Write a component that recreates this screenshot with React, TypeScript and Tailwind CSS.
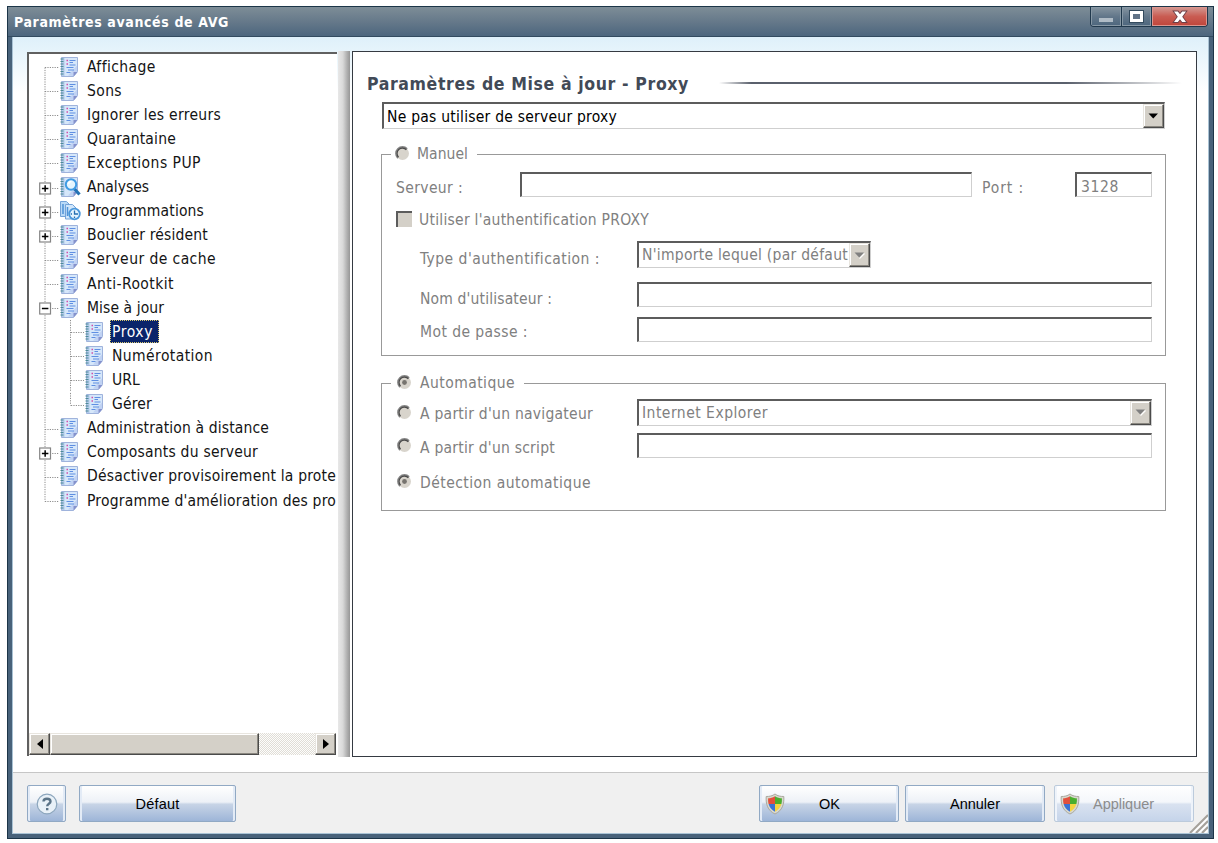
import { useLayoutEffect, useRef, type ReactNode } from "react";
import clsx from "clsx";

/** One line of text whose letter spacing is adjusted so that it spans `w` pixels. */
function Label({ text, w, className }: { text: string; w: number; className?: string }) {
  const ref = useRef<HTMLSpanElement>(null);
  useLayoutEffect(() => {
    const el = ref.current;
    if (!el) return;
    el.style.letterSpacing = "0px";
    const natural = el.getBoundingClientRect().width;
    el.style.letterSpacing = `${(w + 1 - natural) / text.length}px`;
  }, [text, w]);
  return (
    <span className={clsx("shrink-0", className)}>
      <span ref={ref} className="inline-block whitespace-pre">
        {text}
      </span>
    </span>
  );
}

function NotePage() {
  return (
    <>
      <path d="M2.500 1.500h16v14l-4 5h-12z" fill="#d6e7fa" stroke="#9fb3dc" />
      <path d="M3 2h2.500v18H3z" fill="#b3cbea" />
      <path d="M9 19.500l9-10v6l-3.500 4.500z" fill="#c0d2f3" />
      <path d="M14.500 20.500v-4.500h4z" fill="#8592cc" />
      <path d="M1.500 3h3M1.500 5.500h3M1.500 8h3M1.500 10.500h3M1.500 13h3M1.500 15.500h3M1.500 18h3" stroke="#4d8c96" strokeWidth="1.200" />
    </>
  );
}

function NoteIcon() {
  return (
    <svg viewBox="0 0 21 22" className="h-[22px] w-[21px] shrink-0">
      <NotePage />
      <path d="M7.500 4.500h1.500M7.500 8h1.500" stroke="#d04fa8" strokeWidth="1.400" />
      <path d="M10.500 4.500h6M10.500 6.500h3.500M10.500 9h6" stroke="#5f8fe2" strokeWidth="1.100" />
      <path d="M7.500 11.500h7M9 14h6M7.500 16.500h4" stroke="#5f8fe2" strokeWidth="1.100" />
    </svg>
  );
}

function SearchNoteIcon() {
  return (
    <svg viewBox="0 0 21 22" className="h-[22px] w-[21px] shrink-0 overflow-visible">
      <NotePage />
      <path d="M15.500 13l5 5.500" stroke="#2372b4" strokeWidth="3.200" />
      <circle cx="12" cy="8.500" r="5.200" fill="#e4f5ff" stroke="#3f9be4" strokeWidth="2" />
      <path d="M9.500 8a3 3 0 0 1 3-2.500" stroke="#fff" strokeWidth="1.500" fill="none" />
    </svg>
  );
}

function ScheduleIcon() {
  return (
    <svg viewBox="0 0 21 22" className="h-[22px] w-[21px] shrink-0 overflow-visible">
      <path d="M1.500 1.500h6l3 3v12h-9z" fill="#b9d9f7" stroke="#74a3d8" />
      <path d="M6.500 4.500h7l3.500 3.500v11h-10.500z" fill="#d0e6fb" stroke="#74a3d8" />
      <path d="M4 4v10M8.500 7v9" stroke="#4f93d8" strokeWidth="1.500" />
      <circle cx="15.500" cy="14" r="5.300" fill="#e6f5ff" stroke="#4b97da" strokeWidth="1.800" />
      <path d="M15.500 10.500v3.500h3.500M15.500 16.500v1.500M11.800 14h1.200" stroke="#246eb0" strokeWidth="1.300" fill="none" />
    </svg>
  );
}

type Kind = "note" | "search" | "schedule";
type Node = { text: string; w: number; kind?: Kind; box?: "+" | "-"; child?: boolean; selected?: boolean };

const nodes: Node[] = [
  { text: "Affichage", w: 68 },
  { text: "Sons", w: 34 },
  { text: "Ignorer les erreurs", w: 133 },
  { text: "Quarantaine", w: 88 },
  { text: "Exceptions PUP", w: 113 },
  { text: "Analyses", w: 61, kind: "search", box: "+" },
  { text: "Programmations", w: 116, kind: "schedule", box: "+" },
  { text: "Bouclier résident", w: 120, box: "+" },
  { text: "Serveur de cache", w: 128 },
  { text: "Anti-Rootkit", w: 86 },
  { text: "Mise à jour", w: 76, box: "-" },
  { text: "Proxy", w: 40, child: true, selected: true },
  { text: "Numérotation", w: 100, child: true },
  { text: "URL", w: 27, child: true },
  { text: "Gérer", w: 39, child: true },
  { text: "Administration à distance", w: 181 },
  { text: "Composants du serveur", w: 170, box: "+" },
  { text: "Désactiver provisoirement la prote", w: 248 },
  { text: "Programme d'amélioration des pro", w: 248 },
];

function Connector({ node, first, last }: { node: Node; first: boolean; last: boolean }) {
  const dots = { stroke: "#8c8c8c", strokeWidth: 1, strokeDasharray: "1.2 1.2" };
  return (
    <svg viewBox={node.child ? "0 0 45 24.11" : "0 0 20 24.11"} className={clsx("h-[24.11px] shrink-0", node.child ? "w-[45px]" : "w-[20px]")}>
      <line x1="6" x2="6" y1={first ? 12.5 : 0} y2={last ? 12.5 : 24.11} {...dots} />
      {node.child ? (
        <>
          <line x1="31.500" x2="31.500" y1="0" y2={node.text === "Gérer" ? 12.5 : 24.11} {...dots} />
          <line x1="32" x2="45" y1="12.500" y2="12.500" {...dots} />
        </>
      ) : (
        <line x1="6" x2="20" y1="12.500" y2="12.500" {...dots} />
      )}
      {node.box && (
        <>
          <rect x="0.700" y="7" width="10.800" height="11" fill="#fff" stroke="#858585" strokeWidth="1.200" />
          <path d={node.box === "+" ? "M2.900 12.500h6.500M6.150 9.200v6.600" : "M2.900 12.500h6.500"} stroke="#000" strokeWidth="1.500" />
        </>
      )}
    </svg>
  );
}

function Tree() {
  return (
    <ul className="flex flex-1 flex-col overflow-hidden pt-px">
      {nodes.map((n, i) => (
        <li key={n.text} className="flex h-[24.11px] shrink-0 items-center pl-[10px]">
          <Connector node={n} first={i === 0} last={i === nodes.length - 1} />
          <span className="-mt-px flex shrink-0">
            {n.kind === "search" ? <SearchNoteIcon /> : n.kind === "schedule" ? <ScheduleIcon /> : <NoteIcon />}
          </span>
          {n.selected ? (
            <span className="-mt-px ml-[5px] flex h-[23px] w-[49px] items-center border border-dotted border-[#d8c870] bg-[#0a246a] pl-px text-white">
              <Label text={n.text} w={n.w} />
            </span>
          ) : (
            <span className="-mt-px pl-[7px]">
              <Label text={n.text} w={n.w} />
            </span>
          )}
        </li>
      ))}
    </ul>
  );
}

const raised =
  "border border-t-[#e8e5df] border-l-[#e8e5df] border-r-[#4a4a4a] border-b-[#4a4a4a] bg-[#d4d0c8] shadow-[inset_-1px_-1px_0_#8a8780,inset_1px_1px_0_#fff]";

function ScrollBar() {
  return (
    <div className="mr-px mb-px flex h-[22px] shrink-0 bg-[repeating-conic-gradient(#e0ddd6_0_25%,#fdfdfc_0_50%)] bg-[length:2px_2px]">
      <div className={clsx("flex w-[21px] items-center justify-center", raised)}>
        <svg viewBox="0 0 6 10" className="h-[10px] w-[6px]"><path d="M6 0v10L0 5z" /></svg>
      </div>
      <div className={clsx("w-[209px]", raised)} />
      <div className={clsx("ml-auto flex w-[21px] items-center justify-center", raised)}>
        <svg viewBox="0 0 6 10" className="h-[10px] w-[6px]"><path d="M0 0v10l6-5z" /></svg>
      </div>
    </div>
  );
}

const sunken = "border-t-2 border-l-2 border-r border-b border-t-[#5c5c5c] border-l-[#5c5c5c] border-r-[#cfcfcf] border-b-[#cfcfcf] bg-white";

function Field({ className, children }: { className: string; children?: ReactNode }) {
  return <div className={clsx("flex h-[25px] shrink-0 items-center", sunken, className)}>{children}</div>;
}

function Combo({ text, w, className, disabled }: { text: string; w: number; className: string; disabled?: boolean }) {
  return (
    <div className={clsx("flex h-[27px] shrink-0 items-center pl-[3px]", sunken, className)}>
      <Label text={text} w={w} className={disabled ? "" : "pt-[2px]"} />
      <div className={clsx("ml-auto flex h-full w-[21px] shrink-0 items-center justify-center", raised)}>
        <svg viewBox="0 0 11 7" className="h-[7px] w-[11px]">
          {disabled && <path d="M5.500 6.500L10.500 1.500" stroke="#fff" strokeWidth="1.200" fill="none" />}
          <path d="M0.500 0.500h9.500L5.250 5.500z" fill={disabled ? "#808080" : "#000"} />
        </svg>
      </div>
    </div>
  );
}

function Radio({ on, className }: { on?: boolean; className?: string }) {
  return (
    <svg viewBox="0 0 15 15" className={clsx("h-[15px] w-[15px] shrink-0", className)}>
      <circle cx="7.500" cy="7.500" r="6.500" fill="#d8d4cc" />
      <path d="M2.800 12.200A6.600 6.600 0 0 1 12.200 2.800" fill="none" stroke="#858585" strokeWidth="1.500" />
      <path d="M3.500 11.200A5.400 5.400 0 0 1 11.400 3.700" fill="none" stroke="#4a4a4a" strokeWidth="1.300" />
      {on && <circle cx="7.500" cy="7.500" r="2.400" fill="#77746f" />}
    </svg>
  );
}

function Shield() {
  return (
    <svg viewBox="0 0 20 22" className="h-[22px] w-[20px]">
      <path d="M10 1C7.500 3 4.500 3.500 1.200 3.500C.7 11 2.500 17.500 10 21C17.500 17.500 19.300 11 18.800 3.500C15.500 3.500 12.500 3 10 1z" fill="#d9d8ce" stroke="#a9a89e" />
      <path d="M10 3.300C7.500 4.800 5.500 5.300 3.200 5.300C3 7.500 3.100 9.200 3.600 11H10z" fill="#e2503c" />
      <path d="M10 3.300C12.500 4.800 14.500 5.300 16.800 5.300C17 7.500 16.900 9.200 16.400 11H10z" fill="#4aae2e" />
      <path d="M3.600 11H10V18.700C6.600 17 4.700 14.700 3.600 11z" fill="#3a72d4" />
      <path d="M16.400 11H10V18.700C13.400 17 15.300 14.700 16.400 11z" fill="#f4d440" />
    </svg>
  );
}

function Button({ className, disabled, children }: { className: string; disabled?: boolean; children: ReactNode }) {
  return (
    <button
      className={clsx(
        "flex h-[37px] shrink-0 items-center rounded-[2px] border font-['Liberation_Sans',sans-serif] text-[14.500px]",
        disabled
          ? "border-[#bccbdc] bg-[linear-gradient(#fff,#f4f7fb_46%,#d9e2f0_52%,#c5d4ea)] text-[#8c8c8c] shadow-[inset_2px_0_0_#eef3fa,inset_-2px_0_0_#eef3fa]"
          : "border-[#91a9c4] bg-[linear-gradient(#fff,#edf1f7_46%,#c7d4e6_52%,#9db5d8)] text-black shadow-[inset_2px_0_0_#e3ebf6,inset_-2px_0_0_#e3ebf6]",
        className,
      )}
    >
      {children}
    </button>
  );
}

function TitleBar() {
  return (
    <header className="flex h-[30px] shrink-0 items-start justify-between border-b border-[#324b60] bg-[linear-gradient(#7d8d97,#66798a_50%,#4c667e)] pl-[6px] text-white">
      <Label text="Paramètres avancés de AVG" w={214} className="pt-[6px] text-[14px] leading-[18px] font-bold" />
      <div className="mr-[5px] flex h-[20px] overflow-hidden rounded-b-[4px] border border-t-0 border-[#20384c]">
        <div className="flex w-[31px] justify-center border-r border-[#20384c] bg-[linear-gradient(#8695a1,#62778a_50%,#4d667d)] pt-[11px] shadow-[inset_0_0_0_1px_#8798a5]">
          <div className="h-[4px] w-[14px] bg-[#b0bcc6]" />
        </div>
        <div className="flex w-[30px] justify-center border-r border-[#20384c] bg-[linear-gradient(#8695a1,#62778a_50%,#4d667d)] pt-[4px] shadow-[inset_0_0_0_1px_#8798a5]">
          <div className="h-[11px] w-[13px] border-[3px] border-white bg-[#607286] outline outline-[#344b5e]" />
        </div>
        <div className="flex w-[55px] justify-center bg-[linear-gradient(#d39a94,#c95c52_50%,#c0453b)] pt-[3px] shadow-[inset_0_0_0_1px_#dc958e]">
          <svg viewBox="0 0 16 14" className="h-[14px] w-[16px]">
            <path d="M2 1.500h3.800L8 4.300L10.200 1.500H14L10.200 6.700L14 12H10.200L8 9.200L5.800 12H2L5.800 6.700z" fill="#fff" stroke="#6d4048" strokeWidth="1.800" paintOrder="stroke" />
          </svg>
        </div>
      </div>
    </header>
  );
}

function ProxyPanel() {
  return (
    <section className="flex flex-1 flex-col border-[1.500px] border-[#353a42] bg-white pr-[30px] pl-[29px] text-[#808080]">
      <div className="mt-[18px] -ml-[15px] flex h-[26px] items-center text-[#424a57]">
        <Label text="Paramètres de Mise à jour - Proxy" w={321} className="pt-px text-[17.500px] leading-[26px] font-bold" />
        <div className="-mr-[16px] ml-[30px] h-[1.500px] flex-1 bg-[linear-gradient(90deg,transparent,#5a606c_7%,#5a606c_75%,transparent)]" />
      </div>
      <Combo text="Ne pas utiliser de serveur proxy" w={229} className="mt-[6px] w-[783px] text-black" />

      <fieldset className="mt-[15px] -ml-px h-[212px] w-[785px] border border-[#999]">
        <legend className="ml-[9px] flex h-[20px] w-[86px] items-center pl-[4px]">
          <Radio className="-mt-[2px]" />
          <Label text="Manuel" w={50} className="pl-[7px]" />
        </legend>
        <div className="mt-[8px] flex h-[25px] items-center pl-[14px]">
          <Label text="Serveur :" w={66} className="pt-[6px]" />
          <Field className="ml-auto w-[452px]" />
          <Label text="Port :" w={41} className="ml-[10px] pt-[6px]" />
          <Field className="mr-[13px] ml-[51px] w-[77px] pl-[4px]"><Label text="3128" w={37} className="pt-[3px]" /></Field>
        </div>
        <div className="mt-[9px] flex h-[26px] items-center pl-[14px]">
          <div className="h-[16px] w-[16px] border-t-2 border-l-2 border-[#5c5c5c] bg-[#d4d0c8]" />
          <Label text="Utiliser l'authentification PROXY" w={229} className="pt-[2px] pl-[7px]" />
        </div>
        <div className="mt-[9px] flex h-[27px] items-center pl-[38px]">
          <Label text="Type d'authentification :" w={179} className="pt-[9px]" />
          <Combo text="N'importe lequel (par défaut" w={205} className="mr-[294px] ml-auto w-[234px]" disabled />
        </div>
        <div className="mt-[14px] flex h-[25px] items-center pl-[38px]">
          <Label text="Nom d'utilisateur :" w={131} className="pt-[8px]" />
          <Field className="mr-[13px] ml-auto w-[515px]" />
        </div>
        <div className="mt-[10px] flex h-[25px] items-center pl-[38px]">
          <Label text="Mot de passe :" w={107} className="pt-[5px]" />
          <Field className="mr-[13px] ml-auto w-[515px]" />
        </div>
      </fieldset>

      <fieldset className="mt-[17px] -ml-px h-[138px] w-[785px] border border-[#999]">
        <legend className="ml-[9px] flex h-[20px] w-[133px] items-center pl-[6px]">
          <Radio on className="-mt-[2px]" />
          <Label text="Automatique" w={94} className="pl-[8px]" />
        </legend>
        <div className="mt-[5px] flex h-[28px] items-center pl-[15px]">
          <Radio />
          <Label text="A partir d'un navigateur" w={172} className="pt-[4px] pl-[8px]" />
          <Combo text="Internet Explorer" w={125} className="mr-[13px] ml-auto w-[515px]" disabled />
        </div>
        <div className="mt-[7px] flex h-[25px] items-center pl-[15px]">
          <Radio />
          <Label text="A partir d'un script" w={134} className="pt-[4px] pl-[8px]" />
          <Field className="mr-[13px] ml-auto w-[515px]" />
        </div>
        <div className="mt-[11px] flex h-[25px] items-center pl-[15px]">
          <Radio on />
          <Label text="Détection automatique" w={170} className="pt-[3px] pl-[8px]" />
        </div>
      </fieldset>
    </section>
  );
}

export default function App() {
  return (
    <div className="h-[843px] w-[1218px] overflow-hidden bg-white pt-[6px] pl-[7px] font-['DejaVu_Sans_Condensed','DejaVu_Sans',sans-serif] text-[15.500px] leading-[20px] text-[#141414] [font-stretch:condensed]">
      <div className="flex h-[833px] w-[1207px] flex-col border border-[#1c3548] bg-[#48627a]">
        <TitleBar />
        <div className="mx-[4px] mb-[4px] flex flex-1 flex-col border-x border-b border-[#a9c2d4] bg-[linear-gradient(#def0fa,#fff_56px)]">
          <div className="flex h-[735px] shrink-0 items-start pt-[14px] pl-[14px]">
            <div className="mt-[1px] flex h-[704px] w-[310px] flex-col border-t-2 border-l-2 border-[#606060] bg-white">
              <Tree />
              <ScrollBar />
            </div>
            <div className="ml-px h-[706px] w-[12px] bg-[linear-gradient(90deg,#e8e8e8,#d9d9d9_40%,#b0b0b0_75%,#969696)]" />
            <div className="ml-[2px] flex h-[706px] w-[845px]"><ProxyPanel /></div>
          </div>
          <footer className="relative flex flex-1 items-start border-t border-[#c6c6c6] bg-[#f0f0f0] pt-[12px] pl-[14px]">
            <Button className="w-[39px] justify-center">
              <svg viewBox="0 0 22 22" className="h-[22px] w-[22px]">
                <circle cx="11" cy="11" r="9.800" fill="#e9f1f8" stroke="#8ca6bd" strokeWidth="1.200" />
                <path d="M7.500 8.500C7.500 4.800 14.500 4.800 14.500 8.500C14.500 10.800 11.200 10.800 11.200 13.300M11.200 15v2.300" fill="none" stroke="#5b7488" strokeWidth="2.400" />
              </svg>
            </Button>
            <Button className="ml-[13px] w-[157px] justify-center"><Label text="Défaut" w={43} /></Button>
            <Button className="ml-[523px] w-[140px] pl-[5px]"><Shield /><Label text="OK" w={20} className="ml-[34px]" /></Button>
            <Button className="ml-[6px] w-[140px] justify-center"><Label text="Annuler" w={49} /></Button>
            <Button className="ml-[9px] w-[140px] pl-[5px]" disabled><Shield /><Label text="Appliquer" w={60} className="ml-[13px]" /></Button>
            <svg viewBox="0 0 20 20" className="absolute right-0 bottom-0 h-[20px] w-[20px]">
              <path d="M2 20L20 2M8 20L20 8M14 20L20 14" stroke="#a5a19a" strokeWidth="2" />
              <path d="M5 20L20 5M11 20L20 11M17 20L20 17" stroke="#fff" strokeWidth="1.200" />
            </svg>
          </footer>
        </div>
      </div>
    </div>
  );
}
